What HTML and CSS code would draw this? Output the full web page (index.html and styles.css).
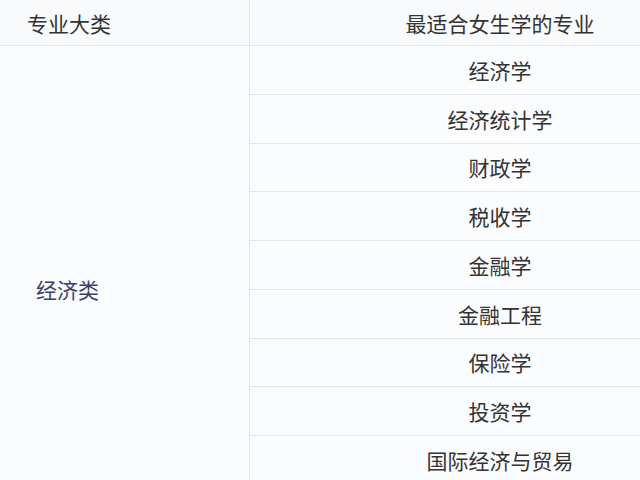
FILE: index.html
```html
<!DOCTYPE html>
<html lang="zh">
<head>
<meta charset="utf-8">
<link rel="stylesheet" href="styles.css">
</head>
<body>
<div class="frame">
<table class="majors">
  <colgroup>
    <col class="col-cat">
    <col class="col-major">
  </colgroup>
  <thead>
    <tr>
      <th class="cat-head">专业大类</th>
      <th class="major-head">最适合女生学的专业</th>
    </tr>
  </thead>
  <tbody>
    <tr><td class="cat" rowspan="10">经济类</td><td class="major">经济学</td></tr>
    <tr><td class="major">经济统计学</td></tr>
    <tr><td class="major">财政学</td></tr>
    <tr><td class="major">税收学</td></tr>
    <tr><td class="major">金融学</td></tr>
    <tr><td class="major">金融工程</td></tr>
    <tr><td class="major">保险学</td></tr>
    <tr><td class="major">投资学</td></tr>
    <tr><td class="major">国际经济与贸易</td></tr>
    <tr><td class="major">贸易经济</td></tr>
  </tbody>
</table>
</div>
</body>
</html>
```
FILE: styles.css
```css
html, body {
  margin: 0;
  padding: 0;
  background: #fbfcfe;
}
.frame {
  width: 640px;
  height: 480px;
  overflow: hidden;
  background: #fbfcfe;
}
.majors {
  width: 751px;
  border-collapse: collapse;
  table-layout: fixed;
  font-family: "Noto Sans CJK SC", "Noto Sans", sans-serif;
  font-size: 21px;
  color: #333333;
}
.col-cat {
  width: 249px;
}
.col-major {
  width: 502px;
}
.majors th, .majors td {
  padding: 0;
  font-weight: normal;
  border: 1px solid #e1e4ea;
}
.majors thead th {
  height: 45px;
  border-top: none;
  background: #f9fafc;
}
.cat-head {
  text-align: left;
  padding-left: 27px !important;
  border-left: none !important;
}
.major-head {
  text-align: center;
}
.cat {
  text-align: left;
  vertical-align: middle;
  padding-left: 36px !important;
  color: #3a3f6a;
  border-left: none !important;
}
.major {
  height: 47.75px;
  text-align: center;
  vertical-align: middle;
}
```
